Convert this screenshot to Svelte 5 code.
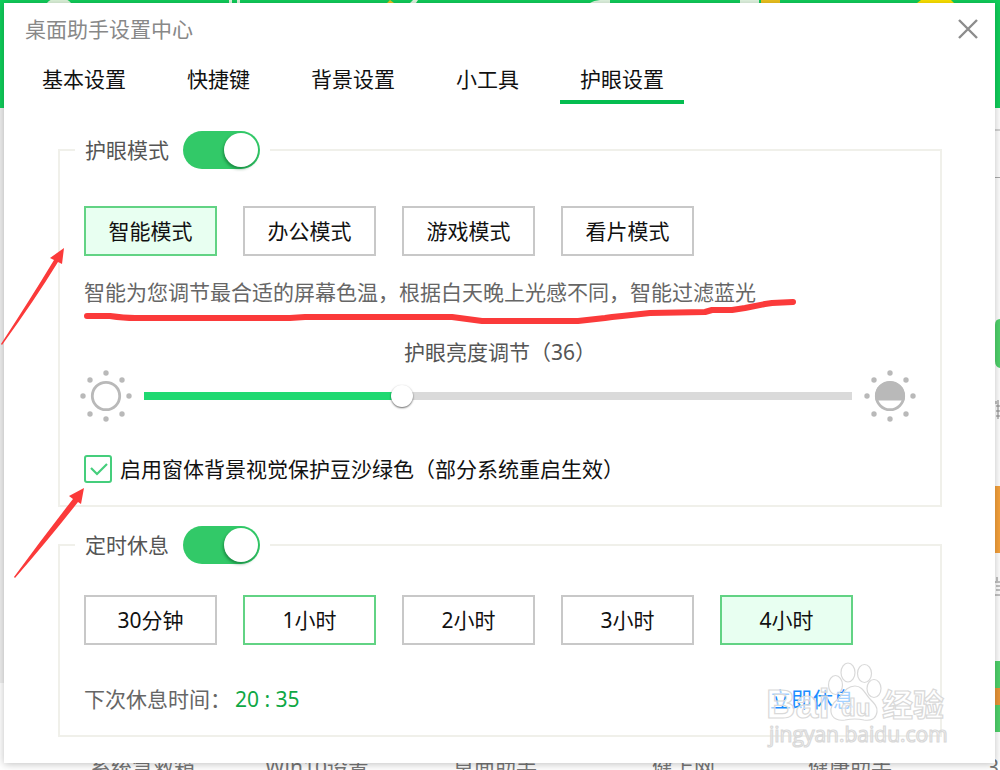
<script>
  // Settings centre of the desktop assistant, opened on the eye-care tab.
  const tabs = ['基本设置', '快捷键', '背景设置', '小工具', '护眼设置'];
  const modes = ['智能模式', '办公模式', '游戏模式', '看片模式'];
  const intervals = ['30分钟', '1小时', '2小时', '3小时', '4小时'];
  const links = ['系统急救箱', 'Win10设置', '桌面助手', '健上网', '健康助手'];

  // the eight rays around each sun icon
  const rays = [[26, 3], [42, 10], [49, 26], [42, 44], [26, 49], [10, 44], [3, 26], [10, 10]];

  let tab = $state('护眼设置');
  let mode = $state('智能模式');
  let interval = $state('4小时');
  let hovered = $state('1小时');
  let eyeCare = $state(true);
  let restTimer = $state(true);
  let greenBackground = $state(true);
  let brightness = $state(36);
</script>

{#snippet sun(half)}
  <svg class="sun" viewBox="0 0 52 52" aria-hidden="true">
    <circle cx="26" cy="26" r="13.7" fill="none" stroke="#b9b9b9" stroke-width="2.8" />
    {#if half}
      <path d="M11.6 30.5a15 15 0 1 1 28.8 0z" fill="#b9b9b9" />
    {/if}
    {#each rays as [x, y]}
      <circle cx={x} cy={y} r="2.7" fill="#b9b9b9" />
    {/each}
  </svg>
{/snippet}

<div class="desktop">
  <div class="backdrop" aria-hidden="true">
    <div class="banner">
      <svg viewBox="0 0 1000 3" preserveAspectRatio="none">
        <path d="M47 3q4-5 12-5t12 5z" fill="#dff6dc" />
        <path d="M229 0h3v3h-3zM237 0h3v3h-3zM410 3l3-3h5l-2 3zM590 3q6-4 20-3v3zM740 0h19v3h-19z" fill="#e4f8e4" />
        <path d="M387 3l3-3 4 3zM761 0h19v3h-19z" fill="#f0c51f" />
        <path d="M917 3l4-3h30l3 3z" fill="#ffe400" />
      </svg>
    </div>
    <div class="left-edge"></div>
    <svg class="right-edge" viewBox="0 0 5 770">
      <path d="M0 130h5M0 177.5h5" stroke="#aaa" />
      <path d="M5 319q-5 0-5 6v36q0 6 5 7z" fill="#4fd26b" />
      <path d="M0 486h5v67H0z" fill="#f6a23c" />
      <path d="M0 661h5v27H0zM0 705h5v27H0z" fill="#4fd26b" />
      <path d="M0 688h5v17H0z" fill="#ea9638" />
      <path d="M1 401v3M3 400v19M1 406h4M1 411h4M1 416h4M0 582h5M2 577v4M1 586h4M1 590h4M0 595h5" stroke="#888" />
    </svg>
    <div class="links">
      {#each links as link}
        <span>{link}</span>
      {/each}
      <span>3</span>
    </div>
  </div>

  <main class="dialog">
    <header>
      <h1>桌面助手设置中心</h1>
      <button class="close" aria-label="关闭">
        <svg viewBox="0 0 22 22"><path d="M2 2l18 18M20 2L2 20" /></svg>
      </button>
    </header>

    <nav>
      {#each tabs as name}
        <button class:current={tab === name} onclick={() => (tab = name)}>{name}</button>
      {/each}
    </nav>

    <div class="sections">
      <fieldset>
        <legend>
          <label for="eye-care">护眼模式</label>
          <input id="eye-care" class="switch" type="checkbox" bind:checked={eyeCare} />
        </legend>
        <div class="options">
          {#each modes as name}
            <button class:selected={mode === name} onclick={() => (mode = name)}>{name}</button>
          {/each}
        </div>
        <p class="hint">智能为您调节最合适的屏幕色温，根据白天晚上光感不同，智能过滤蓝光</p>
        <label class="slider-label" for="brightness">护眼亮度调节（{brightness}）</label>
        <div class="slider">
          {@render sun(false)}
          <input id="brightness" type="range" min="0" max="100" bind:value={brightness} style="--fill: {brightness}%" />
          {@render sun(true)}
        </div>
        <label class="check">
          <span class="box">
            <input type="checkbox" bind:checked={greenBackground} />
            {#if greenBackground}
              <svg viewBox="0 0 28 28" aria-hidden="true"><path d="M7 13l6 6L23 9" /></svg>
            {/if}
          </span>
          启用窗体背景视觉保护豆沙绿色（部分系统重启生效）
        </label>
      </fieldset>

      <fieldset class="rest">
        <legend>
          <label for="rest-timer">定时休息</label>
          <input id="rest-timer" class="switch" type="checkbox" bind:checked={restTimer} />
        </legend>
        <div class="options">
          {#each intervals as name}
            <button
              class:selected={interval === name}
              class:hovered={hovered === name}
              onmouseenter={() => (hovered = name)}
              onclick={() => (interval = name)}>{name}</button>
          {/each}
        </div>
        <div class="next">
          <span>下次休息时间：</span>
          <time datetime="20:35">20 : 35</time>
          <a href="#rest">立即休息</a>
        </div>
      </fieldset>
    </div>
  </main>

  <svg class="marks" viewBox="0 0 1000 770" aria-hidden="true">
    <g fill="#fff" fill-opacity="0.6" stroke="#d9d9d9" stroke-width="1.2">
      <text class="brand" x="766" y="718" font-size="41">Bai</text>
      <ellipse cx="835.500" cy="685" rx="7" ry="9.500" />
      <ellipse cx="848" cy="672.500" rx="7" ry="9.500" />
      <ellipse cx="864.500" cy="673.500" rx="7" ry="9" />
      <ellipse cx="874" cy="688.500" rx="7" ry="9" />
      <path d="M855 686c-9 0-12 8-17 13-5 4-8 8-7 13 1 7 8 9 14 8q10-2 19 0c7 1 12-1 13-8 1-5-3-9-7-13-5-5-7-13-15-13z" />
      <text class="brand" x="841" y="716" font-size="24">du</text>
      <text class="brand" x="882" y="716" font-size="31">经验</text>
      <text class="site" x="769" y="742" font-size="21">jingyan.baidu.com</text>
    </g>
    <path
      class="stroke"
      d="M87 316h23q14 2 25 2h155l15-1h147l30 4h96l27-3 7-1 10-1 28-3 55-1 7-2 20 0 13-2 20-4 7-1 21-1" />
    <path class="arrow" d="M64 248l-14 10 4 2Q31 298 1 344l1 1Q34 301 58 262l4 2z" />
    <path class="arrow" d="M84 488l-15 8 4 3Q44 536 14 577l1 1Q49 539 78 502l3 2z" />
  </svg>
</div>

<style>
  :global(body) {
    margin: 0;
    font-family: "Noto Sans", "Noto Sans CJK SC", sans-serif;
    font-size: 21px;
    line-height: 28px;
    color: #111;
    background: #fff;
  }
  button, input {
    margin: 0;
    font: inherit;
    color: inherit;
  }
  button {
    border: 0;
    background: none;
    padding: 0;
    cursor: pointer;
  }
  .desktop {
    position: relative;
    box-sizing: border-box;
    min-height: 100vh;
    padding: 3px 5px 6px 4px;
    overflow: hidden;
  }

  /* window behind the dialog */
  .backdrop {
    position: absolute;
    inset: 0;
  }
  .banner {
    height: 108px;
    background: #10cf5b;
  }
  .banner svg {
    display: block;
    width: 100%;
    height: 3px;
  }
  .left-edge {
    width: 20px;
    height: 575px;
    background: #efefef;
  }
  .right-edge {
    position: absolute;
    top: 0;
    right: 0;
    width: 5px;
    height: 770px;
  }
  .links {
    position: absolute;
    left: 90px;
    right: 0;
    bottom: -11px;
    display: grid;
    grid-template-columns: 175px 188px 199px 156px 179px auto;
    color: #777;
  }

  .dialog {
    position: relative;
    background: #fff;
    box-shadow: 0 1px 8px rgba(0, 0, 0, 0.25);
    padding-bottom: 26px;
  }
  header {
    display: flex;
    justify-content: space-between;
    align-items: center;
    height: 51px;
    padding: 0 16px 0 21px;
  }
  h1 {
    margin: 0;
    font-size: 21px;
    font-weight: 400;
    color: #888;
  }
  .close {
    width: 22px;
    height: 22px;
  }
  .close svg {
    display: block;
    fill: none;
    stroke: #8c8c8c;
    stroke-width: 2.4;
  }
  nav {
    display: flex;
    gap: 21px;
    padding-left: 18px;
  }
  nav button {
    height: 50px;
    padding: 4px 20px 0;
    border-bottom: 4px solid transparent;
  }
  nav .current {
    border-bottom-color: #05bd50;
  }

  .sections {
    display: flex;
    flex-direction: column;
    gap: 19px;
    padding: 27px 53px 0 54px;
  }
  fieldset {
    min-width: 0;
    margin: 0;
    padding: 0 24px 22px;
    border: 2px solid #f0f0ea;
  }
  legend {
    display: flex;
    align-items: center;
    gap: 14px;
    height: 38px;
    margin-left: -9px;
    padding: 0 10px;
    color: #555;
  }
  .switch {
    appearance: none;
    display: flex;
    justify-content: flex-start;
    box-sizing: border-box;
    width: 77px;
    height: 38px;
    padding: 2px;
    border-radius: 19px;
    background: #ccc;
  }
  .switch:checked {
    justify-content: flex-end;
    background: #32c968;
  }
  .switch::before {
    content: "";
    width: 34px;
    height: 34px;
    border-radius: 50%;
    background: #fff;
    box-shadow: -1px 2px 3px rgba(0, 80, 30, 0.5);
  }
  .options {
    display: flex;
    gap: 26px;
    margin-top: 37px;
  }
  .rest .options {
    margin-top: 31px;
  }
  .options button {
    box-sizing: border-box;
    width: 133px;
    height: 50px;
    border: 2px solid #c8c8c8;
    background: #fff;
  }
  .options .hovered {
    border-color: #62d384;
  }
  .options .selected {
    border-color: #62d384;
    background: #e8fff1;
  }
  .hint {
    margin: 22px 0 32px;
    color: #666;
  }
  .slider-label {
    display: block;
    text-align: center;
    color: #555;
  }
  .slider {
    display: flex;
    align-items: center;
    gap: 12px;
    margin: 4px 0 33px -4px;
  }
  .sun {
    flex: none;
    width: 52px;
    height: 52px;
  }
  .slider input {
    appearance: none;
    flex: 1;
    min-width: 0;
    height: 24px;
    background: linear-gradient(to right, #1fd971 var(--fill), #dadada var(--fill)) center / 100% 8px no-repeat;
  }
  .slider input::-webkit-slider-thumb {
    appearance: none;
    width: 22px;
    height: 22px;
    border-radius: 50%;
    background: #fff;
    box-shadow: 0 1px 2px rgba(0, 0, 0, 0.6);
  }
  .check {
    display: flex;
    align-items: center;
    gap: 8px;
  }
  .box {
    display: grid;
  }
  .box input, .box svg {
    grid-area: 1 / 1;
    width: 28px;
    height: 28px;
  }
  .box input {
    appearance: none;
    box-sizing: border-box;
    border: 2px solid #45ce7c;
    border-radius: 3px;
  }
  .box svg {
    fill: none;
    stroke: #45ce7c;
    stroke-width: 2.2;
    pointer-events: none;
  }
  .next {
    display: flex;
    margin-top: 40px;
    padding-right: 62px;
    color: #666;
  }
  time {
    margin-left: 4px;
    color: #0fa845;
  }
  .next a {
    margin-left: auto;
    color: #1a8cff;
    text-decoration: none;
  }

  .marks {
    position: absolute;
    top: 0;
    left: 0;
    width: 1000px;
    height: 770px;
    pointer-events: none;
  }
  .brand {
    font-family: "Liberation Sans", "Noto Sans CJK SC", sans-serif;
    font-weight: 700;
  }
  .site {
    font-family: "Open Sans", sans-serif;
  }
  .stroke {
    fill: none;
    stroke: #fb3a3a;
    stroke-width: 6;
    stroke-linecap: round;
    stroke-linejoin: round;
  }
  .arrow {
    fill: #fb3a3a;
  }
</style>
